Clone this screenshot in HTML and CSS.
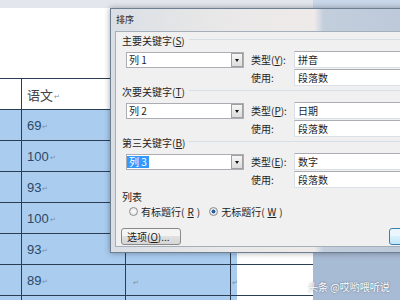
FILE: index.html
```html
<!DOCTYPE html>
<html lang="zh-CN">
<head>
    <meta charset="UTF-8">
    <title>排序</title>
    <link rel="stylesheet" href="styles.css">
</head>
<body>
    <div class="screen">
        <!-- documento de Word con la tabla seleccionada -->
        <div class="page">
            <div class="grid">
                <div class="row head">
                    <div class="c c1"></div>
                    <div class="c c2">语文<span class="pm">↵</span></div>
                    <div class="c c3"></div>
                    <div class="eor"></div>
                </div>
                <div class="row sel">
                    <div class="c c1"></div>
                    <div class="c c2 num">69<span class="pm">↵</span></div>
                    <div class="c c3"></div>
                    <div class="eor"></div>
                </div>
                <div class="row sel">
                    <div class="c c1"></div>
                    <div class="c c2 num">100<span class="pm">↵</span></div>
                    <div class="c c3"></div>
                    <div class="eor"></div>
                </div>
                <div class="row sel">
                    <div class="c c1"></div>
                    <div class="c c2 num">93<span class="pm">↵</span></div>
                    <div class="c c3"></div>
                    <div class="eor"></div>
                </div>
                <div class="row sel">
                    <div class="c c1"></div>
                    <div class="c c2 num">100<span class="pm">↵</span></div>
                    <div class="c c3"></div>
                    <div class="eor"></div>
                </div>
                <div class="row sel">
                    <div class="c c1"></div>
                    <div class="c c2 num">93<span class="pm">↵</span></div>
                    <div class="c c3"></div>
                    <div class="eor"></div>
                </div>
                <div class="row sel">
                    <div class="c c1"></div>
                    <div class="c c2 num">89<span class="pm">↵</span></div>
                    <div class="c c3"><span class="pm">↵</span></div>
                    <div class="eor"><span class="pm">↵</span></div>
                </div>
                <div class="row sel">
                    <div class="c c1"></div>
                    <div class="c c2"></div>
                    <div class="c c3"></div>
                    <div class="eor"></div>
                </div>
            </div>
        </div>
        <div class="appbg"></div>

        <!-- ventana de diálogo "排序" -->
        <div class="dialog">
            <div class="titlebar">排序</div>
            <div class="body">
                <div class="group">
                    <div class="ghead">主要关键字(<u>S</u>)</div>
                    <div class="grow">
                        <div class="combo"><span class="val">列 1</span><span class="drop"></span></div>
                        <span class="lbl">类型(<u>Y</u>):</span>
                        <div class="field">拼音</div>
                    </div>
                    <div class="grow r2">
                        <div></div>
                        <span class="lbl">使用:</span>
                        <div class="field">段落数</div>
                    </div>
                </div>
                <div class="group">
                    <div class="ghead">次要关键字(<u>T</u>)</div>
                    <div class="grow">
                        <div class="combo"><span class="val">列 2</span><span class="drop"></span></div>
                        <span class="lbl">类型(<u>P</u>):</span>
                        <div class="field">日期</div>
                    </div>
                    <div class="grow r2">
                        <div></div>
                        <span class="lbl">使用:</span>
                        <div class="field">段落数</div>
                    </div>
                </div>
                <div class="group">
                    <div class="ghead">第三关键字(<u>B</u>)</div>
                    <div class="grow">
                        <div class="combo"><span class="val hl">列 3</span><span class="drop"></span></div>
                        <span class="lbl">类型(<u>E</u>):</span>
                        <div class="field">数字</div>
                    </div>
                    <div class="grow r2">
                        <div></div>
                        <span class="lbl">使用:</span>
                        <div class="field">段落数</div>
                    </div>
                </div>
                <div class="ghead plain">列表</div>
                <div class="radios">
                    <span class="radio"><span class="dot"></span>有标题行(<u>R</u>)</span>
                    <span class="radio"><span class="dot on"></span>无标题行(<u>W</u>)</span>
                </div>
                <div class="buttons">
                    <button class="btn">选项(<u>O</u>)...</button>
                    <button class="btn def">确定</button>
                </div>
            </div>
        </div>

        <div class="watermark">头条 @哎哟喂听说</div>
    </div>
</body>
</html>
```
FILE: styles.css
```css
body {
    margin: 0;
    font-family: "Noto Sans CJK SC", sans-serif;
}
.screen {
    position: relative;
    width: 400px;
    height: 300px;
    overflow: hidden;
    display: flex;
}
.page {
    width: 313px;
    flex: none;
    background: #fff;
    border-top: 8px solid #e3e7ed;
    padding-top: 70px;
}
.appbg {
    flex: 1;
    background: #a8bbd5;
    border-top: 8px solid #c9d7ea;
}

/* tabla */
.row {
    display: flex;
    height: 31px;
    box-sizing: border-box;
    border-top: 1px solid #2b3d52;
}
.c {
    box-sizing: border-box;
    border-right: 1px solid #2b3d52;
    display: flex;
    align-items: center;
    padding-left: 5px;
    font-size: 13px;
    color: #444;
}
.c1 { width: 22px; }
.c2 { width: 104px; }
.c3 { width: 105px; padding-left: 6px; }
.eor {
    width: 6px;
    display: flex;
    align-items: center;
}
.sel .c, .sel .eor {
    background: #a9ccef;
}
.num {
    font-family: "Liberation Sans", sans-serif;
    color: #2c4866;
}
.pm {
    font-size: 7px;
    color: #7d8fa3;
    margin-left: 1px;
    margin-top: 4px;
}

/* dialogo */
.dialog {
    position: absolute;
    left: 110px;
    top: 8px;
    width: 300px;
    border: 1px solid #6f7f92;
    padding: 0 4px 5px;
    background: linear-gradient(90deg, #dadfe5 0, #e9e8e8 35%, #efeaea 66%, #c3cedd 69%, #bcc8d8 100%);
    box-shadow: 0 0 6px rgba(0, 0, 0, 0.35);
    font-size: 10px;
    color: #1e1e1e;
}
.titlebar {
    height: 22px;
    line-height: 22px;
    padding-left: 1px;
    font-size: 9px;
}
.body {
    height: 216px;
    box-sizing: border-box;
    background: #f0f0f0;
    border: 1px solid #a5afba;
    padding-top: 1px;
}
.ghead {
    display: flex;
    align-items: center;
    height: 14px;
    padding-left: 6px;
    margin-bottom: 4px;
    white-space: nowrap;
}
.ghead::after {
    content: "";
    flex: 1;
    margin: 0 0 2px 4px;
    border-top: 1px solid #d5dfe5;
}
.ghead.plain {
    margin: 3px 0 2px;
}
.ghead.plain::after {
    display: none;
}
.grow {
    display: grid;
    grid-template-columns: 118px 50px 1fr;
    align-items: center;
    padding-left: 10px;
    height: 16px;
}
.grow.r2 {
    height: 15px;
    margin-top: 2px;
}
.lbl {
    padding-left: 7px;
    white-space: nowrap;
}
.combo {
    display: flex;
    justify-content: space-between;
    align-items: center;
    height: 16px;
    box-sizing: border-box;
    border: 1px solid #abadb3;
    background: #fff;
    padding-left: 2px;
}
.val {
    line-height: 12px;
}
.val.hl {
    background: #3399ff;
    color: #fff;
    padding: 0 2px;
    margin-left: -2px;
}
.drop {
    position: relative;
    width: 10px;
    height: 12px;
    border: 1px solid #a0a0a0;
    background: linear-gradient(#f6f6f6, #dcdcdc);
}
.drop::after {
    content: "";
    position: absolute;
    left: 3px;
    top: 5px;
    border: 2px solid transparent;
    border-top: 3px solid #111;
}
.field {
    height: 100%;
    box-sizing: border-box;
    border: 1px solid #dbdfe6;
    border-top-color: #abadb3;
    background: #fff;
    padding-left: 3px;
    display: flex;
    align-items: center;
}
.radios {
    display: flex;
    align-items: center;
    height: 12px;
    padding-left: 13px;
}
.radio {
    display: inline-flex;
    align-items: center;
    gap: 3px;
    margin-right: 9px;
}
.dot {
    width: 9px;
    height: 9px;
    box-sizing: border-box;
    border-radius: 50%;
    border: 1px solid #8e8f8f;
    background: radial-gradient(#fff, #dcdcdc);
}
.dot.on {
    background: radial-gradient(#2f6fb7 0, #1d4f8c 35%, #e8eef4 45%, #cfd6dd 100%);
}
.buttons {
    display: flex;
    gap: 208px;
    margin-top: 11px;
    padding-left: 5px;
}
.btn {
    flex: none;
    width: 60px;
    height: 17px;
    padding: 0 0 0 5px;
    text-align: left;
    white-space: nowrap;
    font: inherit;
    color: #1e1e1e;
    border: 1px solid #8a8a8a;
    border-radius: 3px;
    background: linear-gradient(#f4f4f4 50%, #e0e0e0 50%, #d6d6d6);
}
.btn.def {
    width: 75px;
    padding: 0;
    text-align: center;
    border-color: #3c7fb1;
    background: linear-gradient(#eaf6fd 50%, #d9f0fc 50%, #bee6fd);
}
.watermark {
    position: absolute;
    left: 308px;
    top: 279px;
    font-size: 10px;
    color: #fff;
    text-shadow: 0 0 2px rgba(0, 0, 0, 0.5);
    white-space: nowrap;
}
```
